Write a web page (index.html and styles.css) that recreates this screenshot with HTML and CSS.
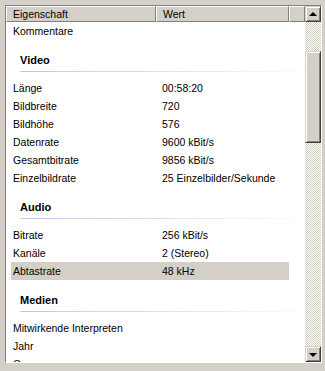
FILE: index.html
```html
<!DOCTYPE html>
<html lang="de">
  <head>
    <meta charset="UTF-8" />
    <title>Eigenschaften</title>
    <link rel="stylesheet" href="styles.css">
  </head>
  <body>
    <div class="listview">
      <div class="main">
        <div class="header">
          <div class="col col-name">Eigenschaft</div>
          <div class="col col-value">Wert</div>
          <div class="col col-rest"></div>
        </div>
        <div class="body">
          <div class="row"><span class="name">Kommentare</span><span class="value"></span></div>

          <div class="group"><span class="group-title">Video</span></div>
          <div class="row"><span class="name">Länge</span><span class="value">00:58:20</span></div>
          <div class="row"><span class="name">Bildbreite</span><span class="value">720</span></div>
          <div class="row"><span class="name">Bildhöhe</span><span class="value">576</span></div>
          <div class="row"><span class="name">Datenrate</span><span class="value">9600 kBit/s</span></div>
          <div class="row"><span class="name">Gesamtbitrate</span><span class="value">9856 kBit/s</span></div>
          <div class="row"><span class="name">Einzelbildrate</span><span class="value">25 Einzelbilder/Sekunde</span></div>

          <div class="group"><span class="group-title">Audio</span></div>
          <div class="row"><span class="name">Bitrate</span><span class="value">256 kBit/s</span></div>
          <div class="row"><span class="name">Kanäle</span><span class="value">2 (Stereo)</span></div>
          <div class="row selected"><span class="name">Abtastrate</span><span class="value">48 kHz</span></div>

          <div class="group"><span class="group-title">Medien</span></div>
          <div class="row"><span class="name">Mitwirkende Interpreten</span><span class="value"></span></div>
          <div class="row"><span class="name">Jahr</span><span class="value"></span></div>
          <div class="row"><span class="name">Genre</span><span class="value"></span></div>
        </div>
      </div>
      <div class="scrollbar">
        <div class="sb-btn"><span class="arrow up"></span></div>
        <div class="sb-track">
          <div class="sb-thumb"></div>
        </div>
        <div class="sb-btn"><span class="arrow down"></span></div>
      </div>
    </div>
  </body>
</html>
```

FILE: styles.css
```css
body {
  margin: 0;
  padding: 5px;
  background-color: #d4d0c8;
  font-family: "Liberation Sans", Arial, sans-serif;
  font-size: 10.5px;
  color: #000;
}
.listview {
  display: flex;
  width: 315px;
  height: 356px;
  border: 1px solid;
  border-color: #808080 #ffffff #ffffff #808080;
  background-color: #fff;
}
.main {
  width: 299px;
  display: flex;
  flex-direction: column;
  overflow: hidden;
}
.header {
  display: flex;
  height: 16px;
  flex-shrink: 0;
}
.col {
  box-sizing: border-box;
  height: 16px;
  line-height: 14px;
  padding-left: 6px;
  background-color: #d4d0c8;
  border-top: 1px solid #fff;
  border-left: 1px solid #fff;
  border-right: 1px solid #808080;
  border-bottom: 1px solid #808080;
  white-space: nowrap;
}
.col-name {
  width: 150px;
}
.col-value {
  width: 133px;
}
.col-rest {
  width: 16px;
}
.body {
  flex: 1;
  overflow: hidden;
}
.row {
  display: flex;
  height: 18px;
  line-height: 18px;
  margin-left: 5px;
  width: 278px;
  white-space: nowrap;
}
.row .name {
  width: 149px;
  padding-left: 2px;
  flex-shrink: 0;
}
.row.selected {
  background-color: #d4d0c8;
}
.group {
  box-sizing: border-box;
  height: 39px;
  padding-top: 13px;
}
.group-title {
  display: block;
  height: 14px;
  line-height: 14px;
  padding-left: 14px;
  font-size: 11px;
  font-weight: bold;
}
.group-title::after {
  content: "";
  display: block;
  height: 1px;
  margin-top: 4px;
  width: 294px;
  background: linear-gradient(to right, #b8cbe4, #dfe8f3 60%, #ffffff);
}
.scrollbar {
  width: 16px;
  display: flex;
  flex-direction: column;
}
.sb-btn,
.sb-thumb {
  box-sizing: border-box;
  background-color: #d4d0c8;
  border: 1px solid;
  border-color: #d4d0c8 #404040 #404040 #d4d0c8;
  box-shadow: inset 1px 1px 0 #fff, inset -1px -1px 0 #808080;
}
.sb-btn {
  height: 16px;
  display: flex;
  align-items: center;
  justify-content: center;
  flex-shrink: 0;
}
.sb-track {
  flex: 1;
  background: repeating-conic-gradient(#d4d0c8 0 25%, #ffffff 0 50%) 0 0 / 2px 2px;
}
.sb-thumb {
  margin-top: 29px;
  height: 92px;
}
.arrow {
  width: 0;
  height: 0;
  border-left: 4px solid transparent;
  border-right: 4px solid transparent;
}
.arrow.up {
  border-bottom: 4px solid #000;
  margin-top: -1px;
}
.arrow.down {
  border-top: 4px solid #000;
  margin-top: 1px;
}
```
